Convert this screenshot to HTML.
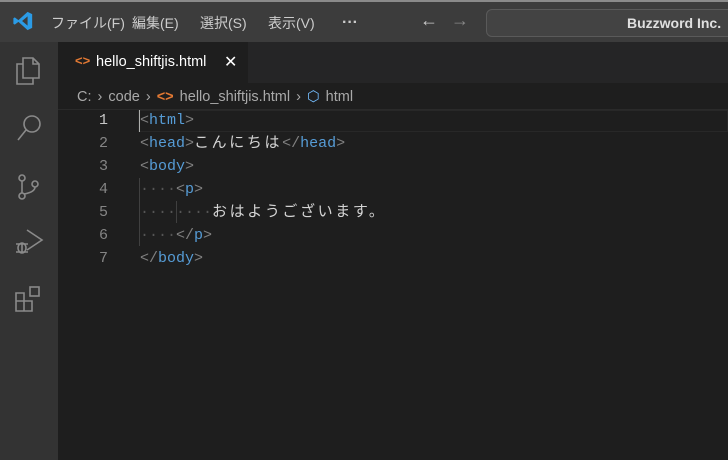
<!DOCTYPE html>
<html><head><meta charset="utf-8"><style>
*{margin:0;padding:0;box-sizing:border-box}
body{width:728px;height:460px;overflow:hidden;background:#1e1e1e;font-family:"Liberation Sans","Noto Sans CJK JP",sans-serif;position:relative}
.title{position:absolute;left:0;top:0;width:728px;height:42px;background:#3c3c3c;border-top:2px solid #8a8a8a}
.menu{position:absolute;top:11px;font-size:14px;color:#cccccc}
.search{position:absolute;left:486px;top:7px;width:260px;height:28px;border:1px solid #5a5a5a;border-radius:6px;background:#434343;color:#e0e0e0;font-size:14px;font-weight:bold;padding:5px 0 0 140px}
.act{position:absolute;left:0;top:42px;width:58px;height:418px;background:#333333}
.tabs{position:absolute;left:58px;top:42px;width:670px;height:41px;background:#252526}
.tab{position:absolute;left:58px;top:42px;width:190px;height:41px;background:#1e1e1e;color:#fff;font-size:14.5px;padding:12px 0 0 38px}
.bc{position:absolute;left:77px;top:89px;font-size:14.5px;color:#a9a9a9;word-spacing:2px}
.code{position:absolute;left:0;top:109px;font-family:"Liberation Mono","Noto Sans CJK JP",monospace;font-size:15px}
.ln{position:absolute;left:80px;width:28px;text-align:right;color:#858585;line-height:18px}
.l{position:absolute;left:140px;color:#d4d4d4;white-space:pre;line-height:18px;height:18px}
.t{color:#569cd6}.b{color:#808080}
.g{color:#555}
.j{letter-spacing:2.6px;line-height:18px}
</style></head><body>
<div class="title">
<svg style="position:absolute;left:12px;top:8px" width="22" height="22" viewBox="0 0 24 24"><path d="M17 2 L22 4.5 V19.5 L17 22 L7 13 L3 16 L1.5 15 V9 L3 8 L7 11 Z M17 7 L11 12 L17 17 Z" fill="#2b9be6"/></svg>
<span class="menu" style="left:51px">ファイル(F)</span>
<span class="menu" style="left:132px">編集(E)</span>
<span class="menu" style="left:200px">選択(S)</span>
<span class="menu" style="left:268px">表示(V)</span>
<span class="menu" style="left:342px;top:12px;font-size:16px;font-weight:bold">···</span>
<span class="menu" style="left:420px;top:8px;font-size:18px">←</span>
<span class="menu" style="left:451px;top:8px;font-size:18px;color:#888">→</span>
<div class="search">Buzzword Inc.</div>
</div>
<div class="act">
<svg style="position:absolute;left:14px;top:12px" width="32" height="210" viewBox="0 0 32 210" fill="none" stroke="#8a8a8a" stroke-width="1.6">
<path d="M9 4 H19 L25 10 V24 H9 Z M19 4 V10 H25 M9 10 H3 V30 H19 V24"/>
<circle cx="18" cy="70" r="8"/><path d="M12 76 L4 86"/>
<circle cx="8" cy="124" r="3"/><circle cx="8" cy="142" r="3"/><circle cx="21" cy="130" r="3"/><path d="M8 127 V139 M21 133 Q21 138 10 140"/>
<path d="M13 176 L28 186 L13 196"/><ellipse cx="8" cy="194" rx="4" ry="5"/><path d="M2 190 H14 M2 198 H14 M8 189 V199"/>
</svg>
<svg style="position:absolute;left:14px;top:243px" width="30" height="32" viewBox="0 0 30 32" fill="none" stroke="#8a8a8a" stroke-width="1.6"><path d="M2 8 H10 V16 H2 Z M2 16 H10 V26 H2 Z M10 16 H18 V26 H10 Z"/><rect x="16" y="2" width="9" height="9"/></svg>
</div>
<div class="tabs"></div>
<div class="tab"><span style="position:absolute;left:17px;top:11px;color:#e37933;font-size:13px;font-weight:bold">&lt;&gt;</span>hello_shiftjis.html<span style="position:absolute;left:166px;top:10px;font-size:16px">✕</span></div>
<div class="bc">C: › code › <span style="color:#e37933;font-weight:bold">&lt;&gt;</span> hello_shiftjis.html › <span style="color:#75beff">⬡</span> html</div>
<div style="position:absolute;left:58px;top:109px;width:670px;height:1px;background:#2a2a2a"></div>
<div style="position:absolute;left:138px;top:110px;width:590px;height:22px;border:1px solid #282828"></div>
<div class="code">
<div class="ln" style="top:3px;color:#c6c6c6">1</div><div class="l" style="top:3px"><span class="b">&lt;</span><span class="t">html</span><span class="b">&gt;</span></div>
<div class="ln" style="top:26px">2</div><div class="l" style="top:26px"><span class="b">&lt;</span><span class="t">head</span><span class="b">&gt;</span><span class="j">こんにちは</span><span class="b">&lt;/</span><span class="t">head</span><span class="b">&gt;</span></div>
<div class="ln" style="top:49px">3</div><div class="l" style="top:49px"><span class="b">&lt;</span><span class="t">body</span><span class="b">&gt;</span></div>
<div class="ln" style="top:72px">4</div><div class="l" style="top:72px"><span class="g">····</span><span class="b">&lt;</span><span class="t">p</span><span class="b">&gt;</span></div>
<div class="ln" style="top:95px">5</div><div class="l" style="top:95px"><span class="g">········</span><span class="j">おはようございます。</span></div>
<div class="ln" style="top:118px">6</div><div class="l" style="top:118px"><span class="g">····</span><span class="b">&lt;/</span><span class="t">p</span><span class="b">&gt;</span></div>
<div class="ln" style="top:141px">7</div><div class="l" style="top:141px"><span class="b">&lt;/</span><span class="t">body</span><span class="b">&gt;</span></div>
</div>
<div style="position:absolute;left:139px;top:110px;width:1px;height:22px;background:#aeafad"></div>
<div style="position:absolute;left:139px;top:178px;width:1px;height:68px;background:#404040"></div>
<div style="position:absolute;left:176px;top:201px;width:1px;height:22px;background:#404040"></div>
</body></html>
